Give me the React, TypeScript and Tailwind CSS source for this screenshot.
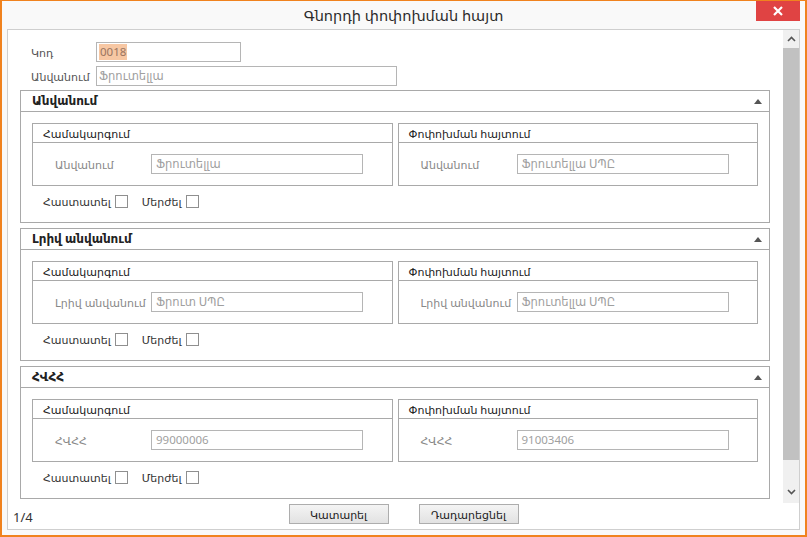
const font = { fontFamily: '"Noto Sans", "DejaVu Sans", sans-serif' };

const TopField = ({ label, value, width, selected }: { label: string; value: string; width: string; selected?: boolean }) => (
  <div className="flex items-center h-[20px]">
    <div className="w-[65px] text-[11px] leading-none text-[#555]">{label}</div>
    <div className={`${width} h-[20px] border border-[#b5b5b5] bg-white flex items-center px-[2px] text-[11.5px] leading-none text-[#a0a0a0]`}>
      {selected ? <span className="bg-[#f7c7a3] text-[#9a7560] px-[1px] py-[2px]">{value}</span> : value}
    </div>
  </div>
);

const Group = ({ title, label, value }: { title: string; label: string; value: string }) => (
  <div className="flex-1 border border-[#a9a9a9] h-[63px] flex flex-col">
    <div className="h-[19px] border-b border-[#a9a9a9] pl-[10px] flex items-center text-[11px] leading-none text-[#222]">{title}</div>
    <div className="flex-1 flex items-center">
      <div className="w-[118px] pl-[22px] text-[11px] leading-none text-[#888] whitespace-nowrap">{label}</div>
      <div className="w-[212px] h-[20px] border border-[#b5b5b5] bg-white flex items-center px-[4px] text-[11.5px] leading-none text-[#9f9f9f] whitespace-nowrap">
        {value}
      </div>
    </div>
  </div>
);

const Check = ({ label, className }: { label: string; className: string }) => (
  <div className={`flex items-center ${className}`}>
    <span className="text-[11px] leading-none text-[#333]">{label}</span>
    <span className="ml-[4px] w-[13px] h-[13px] border border-[#8f8f8f] bg-white" />
  </div>
);

const Section = ({ title, label, left, right }: { title: string; label: string; left: string; right: string }) => (
  <div className="w-[750px] h-[133px] border border-[#a9a9a9] bg-white flex flex-col">
    <div className="h-[21px] border-b border-[#a9a9a9] flex items-center justify-between pl-[11px] pr-[7px]">
      <span className="text-[12px] font-bold leading-none text-[#222]">{title}</span>
      <svg width="8" height="5" viewBox="0 0 8 5">
        <path d="M0 5 L4 0 L8 5 Z" fill="#555" />
      </svg>
    </div>
    <div className="flex gap-[5px] px-[11px] mt-[11px]">
      <Group title="Համակարգում" label={label} value={left} />
      <Group title="Փոփոխման հայտում" label={label} value={right} />
    </div>
    <div className="flex items-center pl-[22px] mt-[9px] h-[13px]">
      <Check label="Հաստատել" className="" />
      <Check label="Մերժել" className="ml-[14px]" />
    </div>
  </div>
);

const Chevron = ({ down }: { down?: boolean }) => (
  <svg width="9" height="6" viewBox="0 0 9 6">
    <path d={down ? "M1 1 L4.5 4.5 L8 1" : "M1 5 L4.5 1.5 L8 5"} fill="none" stroke="#555" strokeWidth="1.6" />
  </svg>
);

export default function App() {
  return (
    <div style={font} className="w-[807px] h-[537px] border-x-2 border-b-2 border-t border-[#f0821e] bg-[#f9f9f9] flex flex-col">
      <div className="relative h-[28px] flex items-center justify-center">
        <span className="text-[14.5px] leading-none text-[#2b2b2b]">Գնորդի փոփոխման հայտ</span>
        <div className="absolute right-[5px] top-0 w-[44px] h-[20px] bg-[#e04343] flex items-center justify-center">
          <svg width="10" height="10" viewBox="0 0 10 10">
            <path d="M1 1 L9 9 M9 1 L1 9" stroke="#fff" strokeWidth="2.2" />
          </svg>
        </div>
      </div>
      <div className="mx-[5px] mb-[5px] flex-1 border border-[#cfcfcf] bg-white flex flex-col">
        <div className="flex h-[473px]">
          <div className="flex-1 flex flex-col pt-[12px]">
            <div className="flex flex-col gap-[4px] pl-[23px]">
              <TopField label="Կոդ" value="0018" width="w-[145px]" selected />
              <TopField label="Անվանում" value="Ֆրուտելլա" width="w-[301px]" />
            </div>
            <div className="flex flex-col gap-[5px] pl-[12px] mt-[4px]">
              <Section title="Անվանում" label="Անվանում" left="Ֆրուտելլա" right="Ֆրուտելլա ՍՊԸ" />
              <Section title="Լրիվ անվանում" label="Լրիվ անվանում" left="Ֆրուտ ՍՊԸ" right="Ֆրուտելլա ՍՊԸ" />
              <Section title="ՀՎՀՀ" label="ՀՎՀՀ" left="99000006" right="91003406" />
            </div>
          </div>
          <div className="w-[16px] flex flex-col bg-[#f0f0f0]">
            <div className="h-[18px] flex items-center justify-center">
              <Chevron />
            </div>
            <div className="h-[412px] bg-[#c1c1c1]" />
            <div className="flex-1 flex items-end justify-center pb-[8px]">
              <Chevron down />
            </div>
          </div>
        </div>
        <div className="flex-1 grid grid-cols-[1fr_auto_1fr] pt-[1px] pb-[5px]">
          <div className="flex items-end pl-[5px] text-[13px] leading-none text-[#333]">1/4</div>
          <div className="flex gap-[30px]">
            <button className="w-[100px] h-[20px] border border-[#adadad] bg-gradient-to-b from-[#f4f4f4] to-[#e2e2e2] text-[11px] leading-none text-[#222]">Կատարել</button>
            <button className="w-[100px] h-[20px] border border-[#adadad] bg-gradient-to-b from-[#f4f4f4] to-[#e2e2e2] text-[11px] leading-none text-[#222]">Դադարեցնել</button>
          </div>
          <div />
        </div>
      </div>
    </div>
  );
}
